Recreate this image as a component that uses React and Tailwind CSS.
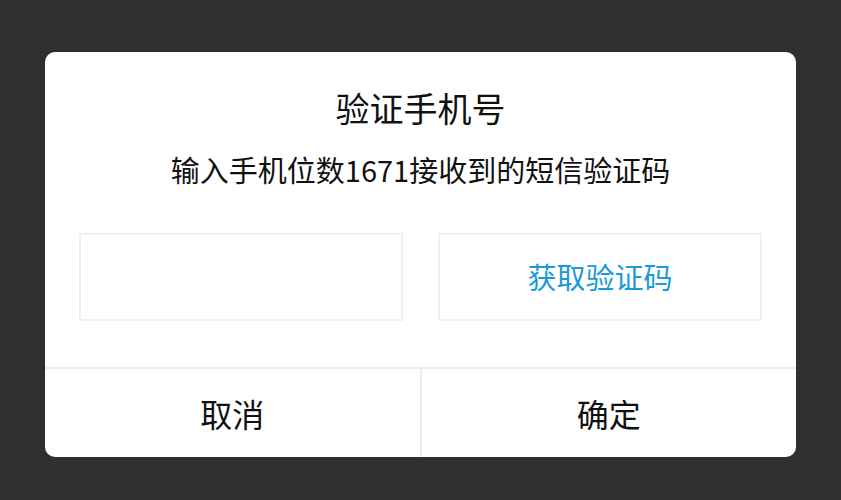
const font = { fontFamily: '"Noto Sans CJK SC", "Noto Sans", sans-serif' };

export default function App() {
    return (
        <div className="min-h-[500px] w-full bg-[#2f2f2f] flex justify-center pt-[52px]" style={font}>
            <div className="w-[751px] h-[405px] bg-white rounded-[10px] overflow-hidden flex flex-col">
                <div className="flex flex-col items-center pt-[36px] px-[34px] pb-[46px]">
                    <h1 className="text-[34px] leading-[40px] text-[#111]">验证手机号</h1>
                    <p className="mt-[21px] text-[29px] leading-[40px] text-[#111]">输入手机位数1671接收到的短信验证码</p>

                    <div className="mt-[44px] w-full flex justify-between">
                        <input
                            className="w-[324px] h-[88px] border-2 border-[#f0f0f0] outline-none px-4 text-[28px]"
                            type="text"
                        />
                        <button className="w-[324px] h-[88px] border-2 border-[#f0f0f0] text-[29px] text-[#1a9ad8]">
                            获取验证码
                        </button>
                    </div>
                </div>

                {/* actions */}
                <div className="flex flex-1 border-t-2 border-[#ececec]">
                    <button className="flex-1 text-[32px] text-[#111] border-r-2 border-[#ececec]">取消</button>
                    <button className="flex-1 text-[32px] text-[#111]">确定</button>
                </div>
            </div>
        </div>
    );
}
